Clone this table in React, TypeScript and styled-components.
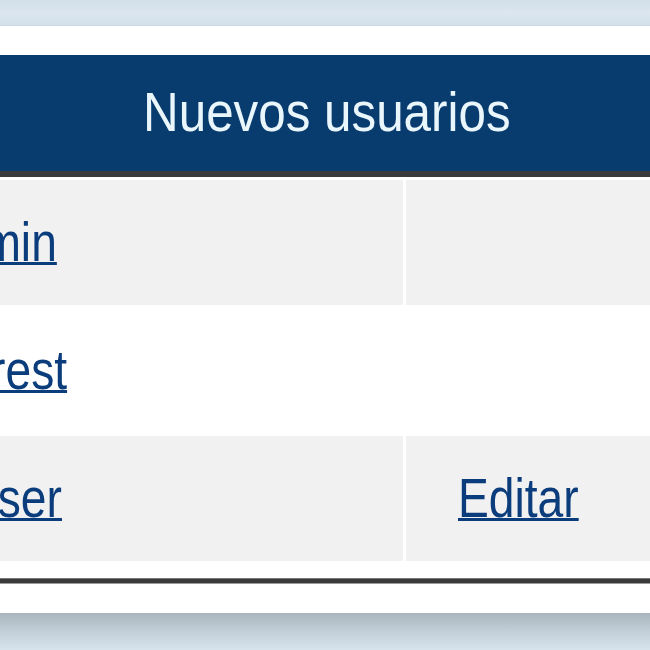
import React from "react";
import styled, { createGlobalStyle } from "styled-components";

const GlobalStyle = createGlobalStyle`
  html, body { margin: 0; padding: 0; background: #ffffff; }
  body { font-family: "Liberation Sans", Arial, sans-serif; }
`;

const Page = styled.div`
  width: 650px;
  height: 650px;
  display: flex;
  flex-direction: column;
  overflow: hidden;
`;

const TopBar = styled.div`
  height: 25px;
  flex: none;
  background: linear-gradient(#d2dfe9, #dbe6ef 50%, #d3e0ea);
  border-bottom: 1px solid #cbd8e3;
`;

const Panel = styled.div`
  flex: none;
  background: #ffffff;
  padding: 29px 0 29px;
  overflow: hidden;
`;

const TableBox = styled.div`
  width: 895px;
  margin-left: -121px;
  font-family: "Liberation Sans", Arial, sans-serif;
  font-size: 55px;
`;

const Header = styled.div`
  height: 122px;
  box-sizing: border-box;
  background: #083c6e;
  border-bottom: 6px solid #3a3a3a;
  padding-bottom: 3px;
  display: flex;
  align-items: center;
  justify-content: center;
  color: #e9f6fc;
`;

const HeaderText = styled.span`
  display: inline-block;
  transform: scaleX(0.897);
  transform-origin: center;
  white-space: nowrap;
`;

const Rows = styled.div`
  display: grid;
  grid-template-columns: 524px 368px;
  column-gap: 3px;
  row-gap: 3px;
  padding-top: 3px;
`;

const Cell = styled.div<{ $striped: boolean }>`
  height: 125px;
  box-sizing: border-box;
  display: flex;
  align-items: center;
  padding-left: 52px;
  padding-bottom: 2px;
  background: ${(p) => (p.$striped ? "#f1f1f1" : "#ffffff")};
`;

const Link = styled.a`
  display: inline-block;
  transform: scaleX(0.84);
  transform-origin: left center;
  white-space: nowrap;
  color: #0b3c7c;
  text-decoration: underline;
  text-decoration-thickness: 3px;
  text-underline-offset: 1px;
  cursor: pointer;
`;

const FooterRule = styled.div`
  margin-top: 17px;
  height: 4px;
  background: #3a3a3a;
  border-top: 1px solid #7a7a7a;
  border-bottom: 1px solid #9a9a9a;
`;

const BottomBar = styled.div`
  flex: 1;
  background: linear-gradient(#a9b5bd, #c3cfd8 50%, #d8e4ed);
`;

const users = [
  { name: "admin", edit: false },
  { name: "awrest", edit: false },
  { name: "rouser", edit: true },
];

export default function App() {
  return (
    <>
      <GlobalStyle />
      <Page>
        <TopBar />
        <Panel>
          <TableBox>
            <Header>
              <HeaderText>Nuevos usuarios</HeaderText>
            </Header>
            <Rows>
              {users.map((u, i) => (
                <React.Fragment key={u.name}>
                  <Cell $striped={i % 2 === 0}>
                    <Link>{u.name}</Link>
                  </Cell>
                  <Cell $striped={i % 2 === 0}>
                    {u.edit ? <Link>Editar</Link> : null}
                  </Cell>
                </React.Fragment>
              ))}
            </Rows>
            <FooterRule />
          </TableBox>
        </Panel>
        <BottomBar />
      </Page>
    </>
  );
}
